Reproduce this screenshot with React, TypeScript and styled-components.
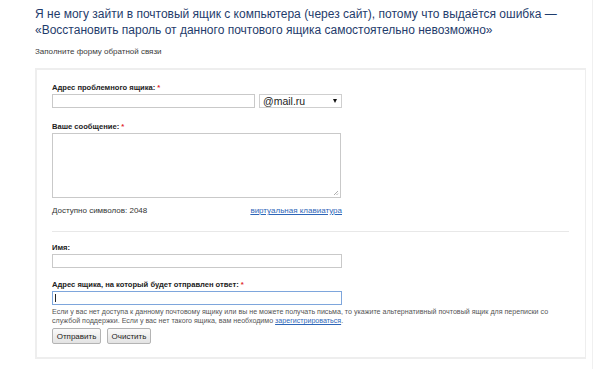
import React from 'react';
import styled, { createGlobalStyle } from 'styled-components';

const GlobalStyle = createGlobalStyle`
  body {
    margin: 0;
    background: #fff;
    font-family: "Liberation Sans", Arial, sans-serif;
  }
`;

const Page = styled.div`
  width: 593px;
  height: 369px;
  box-sizing: border-box;
  border-right: 1px solid #f0f0f0;
  padding: 6px 0 0 35px;
`;

const Title = styled.h1`
  margin: 0;
  font-size: 12px;
  line-height: 16px;
  font-weight: normal;
  color: #1f3c6c;
  white-space: nowrap;
`;

const Subtitle = styled.div`
  margin-top: 9px;
  font-size: 8px;
  line-height: 10px;
  color: #3a3a3a;
`;

const FormBox = styled.form`
  margin-top: 11px;
  width: 551px;
  height: 291px;
  box-sizing: border-box;
  border: 2px solid #eeeeee;
  border-right-width: 1px;
  padding: 13px 16px 0 15px;
`;

const Label = styled.div<{ $gap?: number }>`
  margin-top: ${({ $gap }) => $gap ?? 0}px;
  font-size: 7.6px;
  line-height: 10px;
  font-weight: bold;
  color: #222;
`;

const Star = styled.span`
  color: #e0282c;
  margin-left: 2px;
`;

const Row = styled.div`
  display: flex;
  gap: 4px;
  margin-top: 1px;
`;

const TextInput = styled.div<{ $width: number; $focused?: boolean }>`
  width: ${({ $width }) => $width}px;
  height: 14px;
  box-sizing: border-box;
  border: 1px solid ${({ $focused }) => ($focused ? '#7ea6dc' : '#c9c9c9')};
  background: #fff;
  position: relative;
  margin-top: ${({ $focused }) => ($focused ? 1 : 0)}px;
`;

const Caret = styled.span`
  position: absolute;
  left: 2px;
  top: 2px;
  width: 1px;
  height: 8px;
  background: #222;
`;

const Select = styled.div`
  width: 83px;
  height: 14px;
  box-sizing: border-box;
  border: 1px solid #cfcfcf;
  display: flex;
  align-items: center;
  justify-content: space-between;
  padding: 0 4px 0 3px;
  font-size: 10.5px;
  color: #222;
`;

const Arrow = styled.span`
  width: 0;
  height: 0;
  border-left: 2.5px solid transparent;
  border-right: 2.5px solid transparent;
  border-top: 4px solid #111;
`;

const TextArea = styled.div`
  width: 289px;
  height: 65px;
  box-sizing: border-box;
  border: 1px solid #c9c9c9;
  margin-top: 1px;
  position: relative;
`;

const Grip = styled.svg`
  position: absolute;
  right: 1px;
  bottom: 1px;
`;

const CounterRow = styled.div`
  width: 290px;
  display: flex;
  justify-content: space-between;
  margin-top: 8px;
  font-size: 8px;
  line-height: 10px;
  color: #333;
`;

const Link = styled.a`
  color: #2e66b8;
  text-decoration: underline;
`;

const Divider = styled.hr`
  margin: 15px 0 0 0;
  width: 517px;
  border: none;
  border-top: 1px solid #e8e8e8;
  height: 0;
`;

const Help = styled.div`
  margin-top: 3px;
  font-size: 7.1px;
  line-height: 9px;
  color: #555;
`;

const Buttons = styled.div`
  display: flex;
  gap: 6px;
  margin-top: 2px;
`;

const Button = styled.div<{ $width: number }>`
  width: ${({ $width }) => $width}px;
  height: 16px;
  box-sizing: border-box;
  border: 1px solid #b4b4b4;
  border-radius: 2px;
  background: linear-gradient(#fafafa, #e3e3e3);
  font-size: 8px;
  color: #222;
  display: flex;
  align-items: center;
  justify-content: center;
`;

const App: React.FC = () => (
  <Page>
    <GlobalStyle />
    <Title>
      Я не могу зайти в почтовый ящик с компьютера (через сайт), потому что выдаётся ошибка —
      <br />
      «Восстановить пароль от данного почтового ящика самостоятельно невозможно»
    </Title>
    <Subtitle>Заполните форму обратной связи</Subtitle>
    <FormBox>
      <Label>
        Адрес проблемного ящика:<Star>*</Star>
      </Label>
      <Row>
        <TextInput $width={203} />
        <Select>
          @mail.ru
          <Arrow />
        </Select>
      </Row>
      <Label $gap={14}>
        Ваше сообщение:<Star>*</Star>
      </Label>
      <TextArea>
        <Grip width="6" height="6" viewBox="0 0 6 6">
          <path d="M5 1 L1 5 M5 3.5 L3.5 5" stroke="#999" strokeWidth="0.8" />
        </Grip>
      </TextArea>
      <CounterRow>
        <span>Доступно символов: 2048</span>
        <Link>виртуальная клавиатура</Link>
      </CounterRow>
      <Divider />
      <Label $gap={11}>Имя:</Label>
      <Row>
        <TextInput $width={290} />
      </Row>
      <Label $gap={12}>
        Адрес ящика, на который будет отправлен ответ:<Star>*</Star>
      </Label>
      <TextInput $width={290} $focused>
        <Caret />
      </TextInput>
      <Help>
        Если у вас нет доступа к данному почтовому ящику или вы не можете получать письма, то укажите
        альтернативный почтовый ящик для переписки со
        <br />
        службой поддержки. Если у вас нет такого ящика, вам необходимо <Link>зарегистрироваться</Link>.
      </Help>
      <Buttons>
        <Button $width={49}>Отправить</Button>
        <Button $width={44}>Очистить</Button>
      </Buttons>
    </FormBox>
  </Page>
);

export default App;
